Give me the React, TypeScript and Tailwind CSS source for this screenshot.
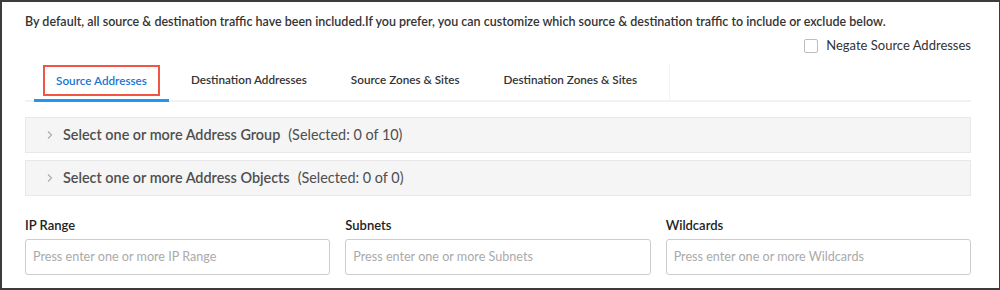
import React, { useState } from 'react';

const tabs = ['Source Addresses', 'Destination Addresses', 'Source Zones & Sites', 'Destination Zones & Sites'];

const Chevron: React.FC = () => (
    <svg width="8" height="10" viewBox="0 0 8 10" className="shrink-0">
        <path d="M2 1.5 L5.5 5 L2 8.5" fill="none" stroke="#aaa" strokeWidth="1.1" />
    </svg>
);

const Accordion: React.FC<{ title: string; count: string }> = ({ title, count }) => (
    <div className="h-[36px] bg-[#f5f5f5] border border-[#e8e8e8] flex items-center pl-[20px] gap-[9px]">
        <Chevron />
        <div className="text-[14.4px] text-[#4f4f4f]">
            <span className="font-semibold">{title}</span>
            <span className="ml-[8px]">{count}</span>
        </div>
    </div>
);

const Field: React.FC<{ label: string; placeholder: string }> = ({ label, placeholder }) => (
    <div className="flex flex-col">
        <label className="text-[13px] font-semibold text-[#222] leading-[16px] mb-[6px]">{label}</label>
        <input
            type="text"
            placeholder={placeholder}
            className="h-[36px] w-full border border-[#cccccc] rounded-[3px] px-[7px] text-[12.6px] text-[#333] placeholder:text-[#aaa] outline-none"
        />
    </div>
);

const App: React.FC = () => {
    const [active, setActive] = useState(0);
    const [negate, setNegate] = useState(false);

    return (
        <div className="w-[1000px] h-[290px] bg-white border-2 border-[#3c3c3c] border-r border-b-2 overflow-hidden" style={{ fontFamily: 'Lato, "Open Sans", sans-serif' }}>
            <div className="pl-[23px] pr-[28px] pt-[12px]">
                <p className="text-[12.5px] font-semibold text-[#333] leading-[16px]">
                    By default, all source &amp; destination traffic have been included.If you prefer, you can customize which source &amp; destination traffic to include or exclude below.
                </p>
                <div className="flex justify-end mt-[6px]">
                    <label className="flex items-center gap-[8px] cursor-pointer">
                        <input
                            type="checkbox"
                            checked={negate}
                            onChange={(e) => setNegate(e.target.checked)}
                            className="appearance-none w-[14px] h-[14px] border border-[#bdbdbd] rounded-[2px] bg-white"
                        />
                        <span className="text-[13px] text-[#333]">Negate Source Addresses</span>
                    </label>
                </div>

                <div className="flex border-b-2 border-[#f2f2f2] mt-[5px]">
                    {tabs.map((t, i) => (
                        <button
                            key={t}
                            onClick={() => setActive(i)}
                            className={`relative h-[39px] flex items-center justify-center text-[11.7px] font-semibold ${i === 0 ? 'w-[135px] ml-[9px]' : 'px-[22px]'} ${i === active ? 'text-[#1976d2]' : 'text-[#333]'}`}
                        >
                            {i === 0 ? (
                                <span className="border-2 border-[#f05545] px-[11px] py-[6px] leading-[15px]">{t}</span>
                            ) : (
                                <span>{t}</span>
                            )}
                            {i === active && <span className="absolute left-0 right-0 -bottom-[2px] h-[3px] bg-[#2196f3]" />}
                        </button>
                    ))}
                    <div className="ml-[10px] mt-[2px] w-px bg-[#f4f4f4]" />
                </div>

                <div className="flex flex-col gap-[7px] mt-[15px]">
                    <Accordion title="Select one or more Address Group" count="(Selected: 0 of 10)" />
                    <Accordion title="Select one or more Address Objects" count="(Selected: 0 of 0)" />
                </div>

                <div className="grid grid-cols-3 gap-[15px] mt-[21px]">
                    <Field label="IP Range" placeholder="Press enter one or more IP Range" />
                    <Field label="Subnets" placeholder="Press enter one or more Subnets" />
                    <Field label="Wildcards" placeholder="Press enter one or more Wildcards" />
                </div>
            </div>
        </div>
    );
};

export default App;
